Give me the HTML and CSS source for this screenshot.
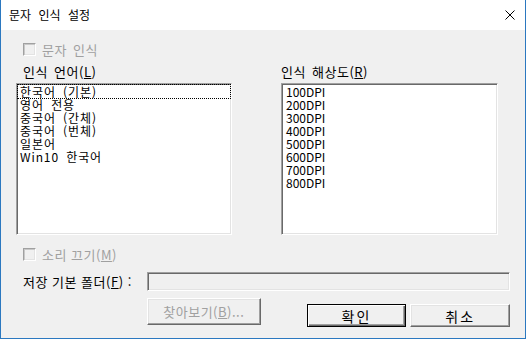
FILE: index.html
```html
<!DOCTYPE html>
<html lang="ko">
<head>
<meta charset="utf-8">
<link rel="stylesheet" href="styles.css">
</head>
<body>
<div class="window">
  <div class="titlebar">
    <span class="title">문자 인식 설정</span>
    <svg class="close" width="12" height="12" viewBox="0 0 12 12"><path d="M1.5 1.5 L10.5 10.5 M10.5 1.5 L1.5 10.5" stroke="#000" stroke-width="1" fill="none"/></svg>
  </div>
  <div class="content">
    <div class="check disabled first"><span class="box"></span><span class="ctext">문자 인식</span></div>
    <div class="lists">
      <div class="col left">
        <div class="label">인식 언어(<u>L</u>)</div>
        <div class="listbox">
          <div class="item focus">한국어 (기본)</div>
          <div class="item">영어 전용</div>
          <div class="item">중국어 (간체)</div>
          <div class="item">중국어 (번체)</div>
          <div class="item">일본어</div>
          <div class="item">Win10 한국어</div>
        </div>
      </div>
      <div class="col right">
        <div class="label">인식 해상도(<u>R</u>)</div>
        <div class="listbox">
          <div class="item">100DPI</div>
          <div class="item">200DPI</div>
          <div class="item">300DPI</div>
          <div class="item">400DPI</div>
          <div class="item">500DPI</div>
          <div class="item">600DPI</div>
          <div class="item">700DPI</div>
          <div class="item">800DPI</div>
        </div>
      </div>
    </div>
    <div class="check disabled second"><span class="box"></span><span class="ctext">소리 끄기(<u>M</u>)</span></div>
    <div class="folder-row">
      <span class="flabel">저장 기본 폴더(<u>F</u>) :</span>
      <div class="field"></div>
    </div>
    <div class="button-row">
      <div class="btn browse"><span class="bt">찾아보기(<u>B</u>)...</span></div>
      <div class="btn default ok"><span class="bt">확인</span></div>
      <div class="btn cancel"><span class="bt">취소</span></div>
    </div>
  </div>
</div>
</body>
</html>
```
FILE: styles.css
```css
* { box-sizing: border-box; }
html, body { margin: 0; padding: 0; background: #f0f0f0; }
body {
  font-family: "Noto Sans CJK KR", "Noto Sans", sans-serif;
  font-size: 13px;
  letter-spacing: 0.5px;
  color: #000;
}
.window {
  width: 526px;
  height: 339px;
  border: 1px solid #2b78c0;
  border-top: none;
  background: #f0f0f0;
  display: flex;
  flex-direction: column;
}
.titlebar {
  height: 30px;
  background: #fff;
  display: flex;
  align-items: center;
  padding-left: 8px;
  padding-right: 9px;
  flex-shrink: 0;
}
.title {
  font-size: 12px;
  letter-spacing: 0;
  line-height: 16px;
  word-spacing: 4px;
  flex: 1;
  margin-top: -1px;
}
.close { display: block; margin-top: -1px; }
.content {
  padding: 13px 15px 0 15px;
  display: flex;
  flex-direction: column;
}
.check {
  display: flex;
  align-items: center;
  height: 13px;
  margin-left: 7px;
}
.check .box {
  width: 13px;
  height: 13px;
  background: #f0f0f0;
  border: 1px solid;
  border-color: #a0a0a0 #fff #fff #a0a0a0;
  box-shadow: inset 1px 1px #c8c8c8, inset -1px -1px #e3e3e3;
  flex-shrink: 0;
}
.check .ctext {
  margin-left: 6px;
  line-height: 13px;
  word-spacing: 2px;
}
.check.second .ctext { word-spacing: 0; }
.disabled { color: #a0a0a0; }
.lists {
  display: flex;
  gap: 49px;
  margin-top: 8px;
}
.col { display: flex; flex-direction: column; }
.col.left { width: 216px; }
.col.right { width: 217px; }
.label {
  line-height: 16px;
  height: 16px;
  word-spacing: 2px;
}
.col.left .label { padding-left: 7px; }
.col.right .label { padding-left: 0; }
.listbox {
  margin-top: 3px;
  height: 152px;
  background: #fff;
  border: 1px solid;
  border-color: #a0a0a0 #fff #fff #a0a0a0;
  box-shadow: inset 1px 1px #696969, inset -1px -1px #e3e3e3;
  padding: 1px 1px;
  font-size: 12px;
}
.item {
  line-height: 13px;
  height: 13px;
  padding-left: 2px;
  white-space: nowrap;
}
.col.left .item { letter-spacing: 0.9px; word-spacing: 3px; }
.col.right .item { padding-left: 3px; letter-spacing: 0; }
.item.focus { outline: 1px dotted #000; outline-offset: 0; }
.check.second { margin-top: 13px; }
.folder-row {
  display: flex;
  align-items: center;
  margin-top: 11px;
}
.flabel {
  margin-left: 7px;
  width: 124px;
  line-height: 16px;
  word-spacing: 0;
}
.field {
  width: 363px;
  height: 19px;
  background: #f0f0f0;
  border: 1px solid;
  border-color: #a0a0a0 #fff #fff #a0a0a0;
  box-shadow: inset 1px 1px #696969, inset -1px -1px #e3e3e3;
}
.button-row {
  display: flex;
  align-items: flex-start;
  margin-top: 7px;
  padding-left: 131px;
}
.btn {
  display: flex;
  align-items: center;
  justify-content: center;
  background: #f0f0f0;
  border: 1px solid;
  border-color: #fff #696969 #696969 #fff;
  box-shadow: inset -1px -1px #a0a0a0, inset 1px 1px #e3e3e3;
  line-height: 16px;
}
.btn.browse {
  width: 114px;
  height: 27px;
  color: #a0a0a0;
}
.btn.ok, .btn.cancel {
  width: 100px;
  height: 23px;
  margin-top: 6px;
  font-size: 14px;
  letter-spacing: 2px;
}
.btn.ok {
  margin-left: 46px;
  border: 1px solid #000;
  box-shadow: inset 1px 1px #fff, inset -1px -1px #696969, inset -2px -2px #a0a0a0;
}
.btn.cancel { margin-left: 4px; }
u { text-decoration: underline; text-underline-offset: 1px; }
```
